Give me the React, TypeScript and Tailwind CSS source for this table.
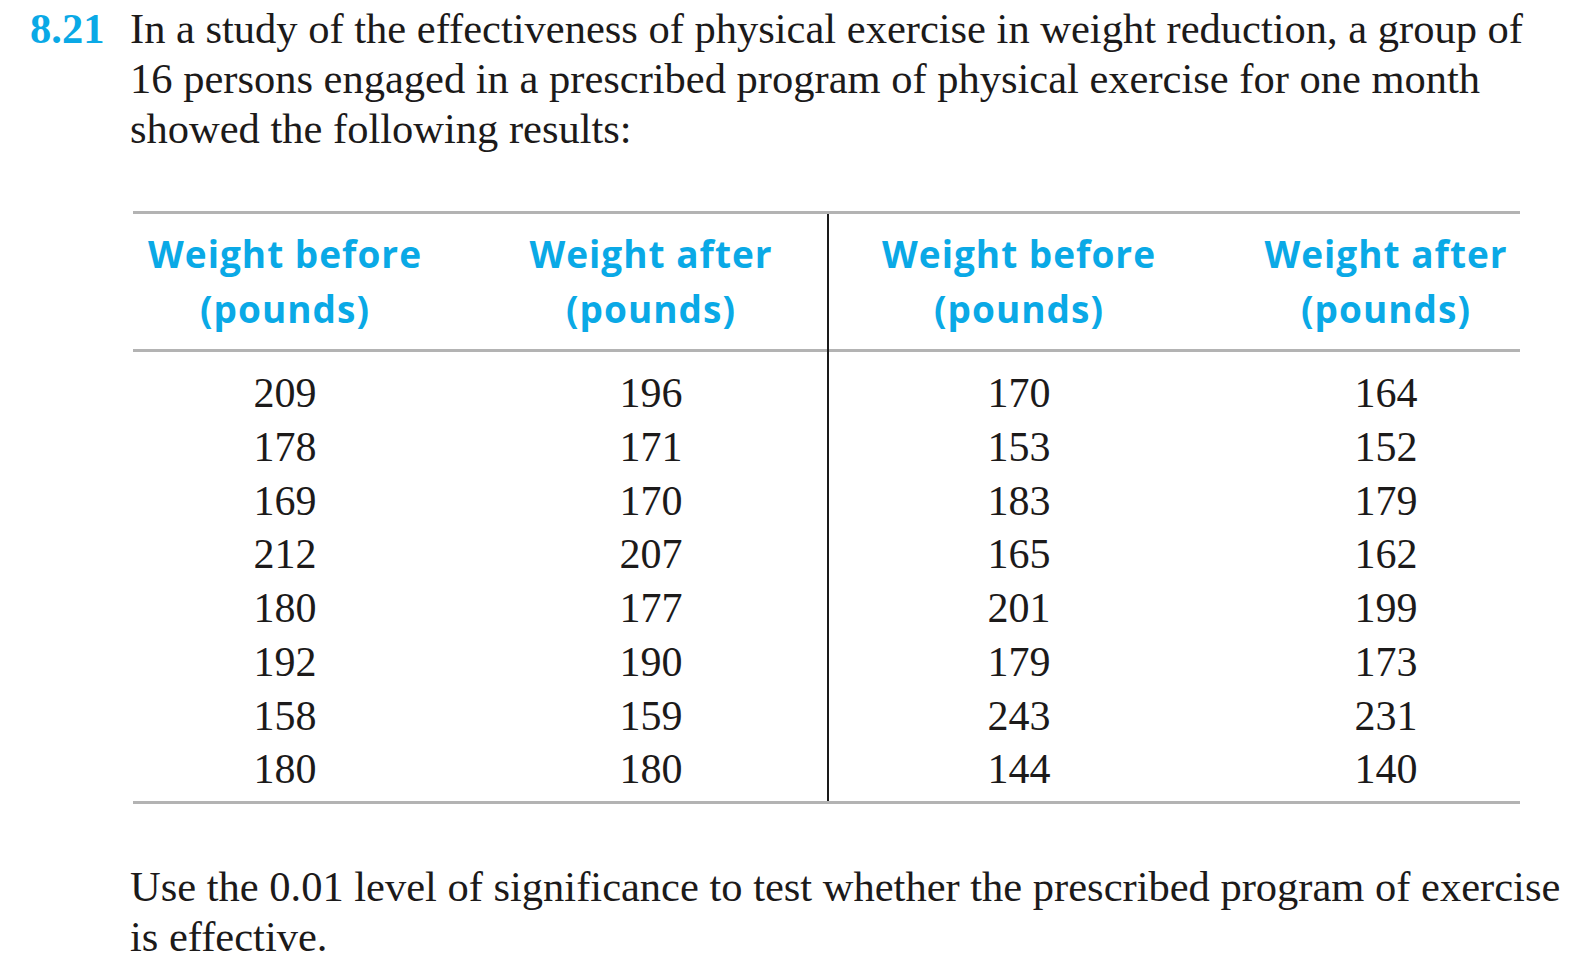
const blue = 'text-[#0aa9e6]';

const left = [
  ['209', '196'],
  ['178', '171'],
  ['169', '170'],
  ['212', '207'],
  ['180', '177'],
  ['192', '190'],
  ['158', '159'],
  ['180', '180'],
];

const right = [
  ['170', '164'],
  ['153', '152'],
  ['183', '179'],
  ['165', '162'],
  ['201', '199'],
  ['179', '173'],
  ['243', '231'],
  ['144', '140'],
];

const Head = ({ label }: { label: string }) => (
  <div
    className={`flex w-[260px] flex-col items-center whitespace-nowrap text-[37px] font-bold leading-[55px] tracking-[1px] ${blue}`}
    style={{ fontFamily: '"Open Sans", Lato, sans-serif' }}
  >
    <span>{label}</span>
    <span>(pounds)</span>
  </div>
);

const Col = ({ values }: { values: string[] }) => (
  <div className="flex w-[260px] flex-col items-center text-[42px] leading-[53.75px]">
    {values.map((v, i) => (
      <span key={i}>{v}</span>
    ))}
  </div>
);

// one half of the table: header + body, two columns each
const Half = ({ rows, offset, gap }: { rows: string[][]; offset: string; gap: string }) => (
  <div className="flex flex-col">
    <div className={`flex border-b-[3px] border-[#b3b3b3] pt-[12px] pb-[13px] ${offset} ${gap}`}>
      <Head label="Weight before" />
      <Head label="Weight after" />
    </div>
    <div className={`flex pt-[15px] pb-[4px] ${offset} ${gap}`}>
      <Col values={rows.map((r) => r[0])} />
      <Col values={rows.map((r) => r[1])} />
    </div>
  </div>
);

export default function App() {
  return (
    <div
      className="min-h-screen w-full bg-white text-[#1c1a1a]"
      style={{ fontFamily: '"Liberation Serif", "Times New Roman", serif' }}
    >
      {/* problem statement */}
      <div className="flex pt-[4px] text-[42.5px] leading-[50px]">
        <span className={`w-[130px] shrink-0 pl-[30px] font-bold ${blue}`}>8.21</span>
        <div className="flex flex-col whitespace-nowrap">
          <span>In a study of the effectiveness of physical exercise in weight reduction, a group of</span>
          <span>16 persons engaged in a prescribed program of physical exercise for one month</span>
          <span>showed the following results:</span>
        </div>
      </div>

      {/* data table */}
      <div className="mt-[57px] ml-[133px] flex w-[1387px] border-t-[3px] border-b-[3px] border-[#b3b3b3]">
        <div className="w-[694px]">
          <Half rows={left} offset="pl-[22px]" gap="gap-[106px]" />
        </div>
        <div className="flex-1 border-l-2 border-[#1a1a1a]">
          <Half rows={right} offset="pl-[60px]" gap="gap-[107px]" />
        </div>
      </div>

      {/* question */}
      <div className="mt-[58px] flex flex-col whitespace-nowrap pl-[130px] text-[42.5px] leading-[50px]">
        <span>Use the 0.01 level of significance to test whether the prescribed program of exercise</span>
        <span>is effective.</span>
      </div>
    </div>
  );
}
